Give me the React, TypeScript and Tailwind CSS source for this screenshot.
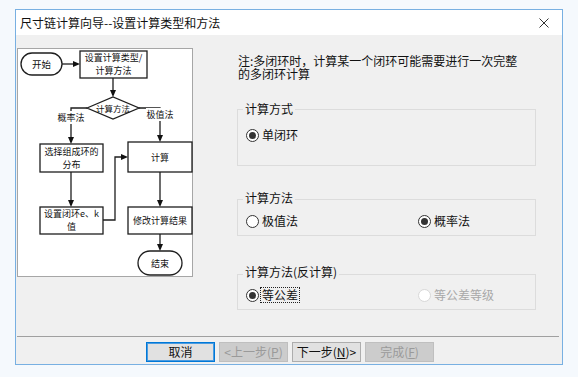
import React from 'react';

const uiFont = "font-[family-name:'Noto_Sans_CJK_SC','Noto_Sans',sans-serif]";

function down(x: number, y: number) {
  return `${x - 3},${y - 7} ${x + 3},${y - 7} ${x},${y}`;
}

function right(x: number, y: number) {
  return `${x - 7},${y - 3} ${x - 7},${y + 3} ${x},${y}`;
}

function Flowchart() {
  const s = { stroke: '#1e1e1e', strokeWidth: 1.3, fill: 'none' };
  return (
    <svg
      width={176}
      height={229}
      viewBox="17 48 176 229"
      className="block bg-white"
      fontSize={9}
      fill="#111"
    >
      <rect x={17.5} y={48.5} width={175} height={228} fill="white" stroke="#a6a6a6" />

      {/* start */}
      <rect x={21} y={53} width={41} height={22} rx={11} {...s} />
      <text x={41.5} y={67.5} textAnchor="middle" fontSize={9.5}>开始</text>
      <line x1={62} y1={64} x2={75} y2={64} {...s} />
      <polygon points={right(80, 64)} fill="#111" />

      {/* setup */}
      <rect x={80} y={51} width={67} height={27} {...s} />
      <text x={113.5} y={61} textAnchor="middle">设置计算类型/</text>
      <text x={113.5} y={74} textAnchor="middle">计算方法</text>
      <line x1={113} y1={78} x2={113} y2={92} {...s} />
      <polygon points={down(113, 97)} fill="#111" />

      {/* decision */}
      <polygon points="87,108 113,97 139,108 113,119" {...s} />
      <text x={113} y={111.5} textAnchor="middle" fontSize={8.5}>计算方法</text>

      <polyline points="87,108 71,108 71,138" {...s} />
      <polygon points={down(71, 144)} fill="#111" />
      <rect x={57} y={111} width={28} height={13} fill="white" />
      <text x={71} y={121} textAnchor="middle">概率法</text>

      <polyline points="139,108 160,108 160,136" {...s} />
      <polygon points={down(160, 142)} fill="#111" />
      <rect x={146} y={108} width={28} height={13} fill="white" />
      <text x={160} y={118} textAnchor="middle">极值法</text>

      {/* left branch */}
      <rect x={40} y={144} width={63} height={28} {...s} />
      <text x={71.5} y={155} textAnchor="middle">选择组成环的</text>
      <text x={71.5} y={168} textAnchor="middle">分布</text>
      <line x1={71} y1={172} x2={71} y2={201} {...s} />
      <polygon points={down(71, 207)} fill="#111" />

      <rect x={40} y={207} width={63} height={27} {...s} />
      <text x={71.5} y={217} textAnchor="middle">设置闭环e、k</text>
      <text x={71.5} y={230} textAnchor="middle">值</text>
      <polyline points="103,220 115,220 115,157 123,157" {...s} />
      <polygon points={right(128, 157)} fill="#111" />

      {/* right branch */}
      <rect x={128} y={142} width={64} height={30} {...s} />
      <text x={160} y={160.5} textAnchor="middle">计算</text>
      <line x1={160} y1={172} x2={160} y2={201} {...s} />
      <polygon points={down(160, 207)} fill="#111" />

      <rect x={128} y={207} width={64} height={27} {...s} />
      <text x={160} y={224} textAnchor="middle">修改计算结果</text>
      <line x1={160} y1={234} x2={160} y2={245} {...s} />
      <polygon points={down(160, 251)} fill="#111" />

      <rect x={138} y={251} width={44} height={24} rx={12} {...s} />
      <text x={160} y={266.5} textAnchor="middle">结束</text>
    </svg>
  );
}

function Radio({
  label,
  checked = false,
  disabled = false,
  focused = false,
}: {
  label: string;
  checked?: boolean;
  disabled?: boolean;
  focused?: boolean;
}) {
  return (
    <div className="flex items-center leading-[16px]">
      <span
        className={`w-[13px] h-[13px] shrink-0 rounded-full border bg-white flex items-center justify-center ${
          disabled ? 'border-[#d8d8d8]' : 'border-[#333333]'
        }`}
      >
        {checked && <span className="w-[7px] h-[7px] rounded-full bg-[#333333]" />}
      </span>
      {focused ? (
        <span className="ml-[1px] border border-dotted border-[#222] px-px leading-[14px]">{label}</span>
      ) : (
        <span className={`ml-[3px] ${disabled ? 'text-[#a8a8a8]' : ''}`}>{label}</span>
      )}
    </div>
  );
}

function Group({
  title,
  className,
  labelTop,
  children,
}: {
  title: string;
  className: string;
  labelTop: string;
  children: React.ReactNode;
}) {
  return (
    <div className={`relative border border-[#dcdcdc] pl-[8px] ${className}`}>
      <span className={`absolute left-[5px] ${labelTop} bg-[#f0f0f0] px-[2px] leading-[14px]`}>{title}</span>
      {children}
    </div>
  );
}

function Btn({ children, kind }: { children: React.ReactNode; kind: 'default' | 'normal' | 'disabled' }) {
  const cls =
    kind === 'default'
      ? 'bg-[#e1e1e1] border-[#0078d7] shadow-[inset_0_0_0_1px_#4a9be0] text-[#111]'
      : kind === 'normal'
        ? 'bg-[#e1e1e1] border-[#adadad] text-[#111]'
        : 'bg-[#cccccc] border-[#bfbfbf] text-[#9a9a9a]';
  return (
    <button className={`w-[69px] h-[20px] border text-[12px] leading-[18px] flex items-center justify-center ${cls}`}>
      {children}
    </button>
  );
}

export default function App() {
  return (
    <div className={`w-[578px] h-[377px] bg-[#f5f9fd] pt-[9px] pl-[15px] overflow-hidden ${uiFont}`}>
      <div className="w-[548px] h-[356px] border border-[#78b0e2] bg-[#f0f0f0] flex flex-col text-[12px] text-[#111]">
        {/* Title bar */}
        <div className="h-[25px] bg-white flex items-center justify-between pl-[4px] pr-[13px]">
          <span className="leading-[14px]">尺寸链计算向导--设置计算类型和方法</span>
          <svg width="10" height="10" viewBox="0 0 10 10">
            <path d="M0.5 0.5 L9.5 9.5 M9.5 0.5 L0.5 9.5" stroke="#333" strokeWidth="1" />
          </svg>
        </div>

        {/* Body */}
        <div className="h-[301px] flex pl-px">
          <div className="mt-[13px]">
            <Flowchart />
          </div>

          <div className="ml-[44px] w-[299px] pt-[19px]">
            <p className="leading-[13px] text-[12px] pl-px">
              注:多闭环时，计算某一个闭环可能需要进行一次完整
              <br />
              的多闭环计算
            </p>

            <Group title="计算方式" className="mt-[29px] h-[57px] pt-[17px]" labelTop="top-[-8px]">
              <Radio label="单闭环" checked />
            </Group>

            <Group title="计算方法" className="mt-[33px] h-[37px] pt-[13px]" labelTop="top-[-9px]">
              <div className="flex">
                <div className="w-[172px]">
                  <Radio label="极值法" />
                </div>
                <Radio label="概率法" checked />
              </div>
            </Group>

            <Group title="计算方法(反计算)" className="mt-[38px] h-[36px] pt-[12px]" labelTop="top-[-10px]">
              <div className="flex">
                <div className="w-[172px]">
                  <Radio label="等公差" checked focused />
                </div>
                <Radio label="等公差等级" disabled />
              </div>
            </Group>
          </div>
        </div>

        {/* Separator */}
        <div className="h-px mx-px mr-[3px] bg-[#a0a0a0]" />

        {/* Buttons */}
        <div className="flex gap-[4px] pl-[130px] pt-[5px]">
          <Btn kind="default">取消</Btn>
          <Btn kind="disabled">
            &lt;上一步(<span className="underline">P</span>)
          </Btn>
          <Btn kind="normal">
            下一步(<span className="underline">N</span>)&gt;
          </Btn>
          <Btn kind="disabled">
            完成(<span className="underline">F</span>)
          </Btn>
        </div>
      </div>
    </div>
  );
}
